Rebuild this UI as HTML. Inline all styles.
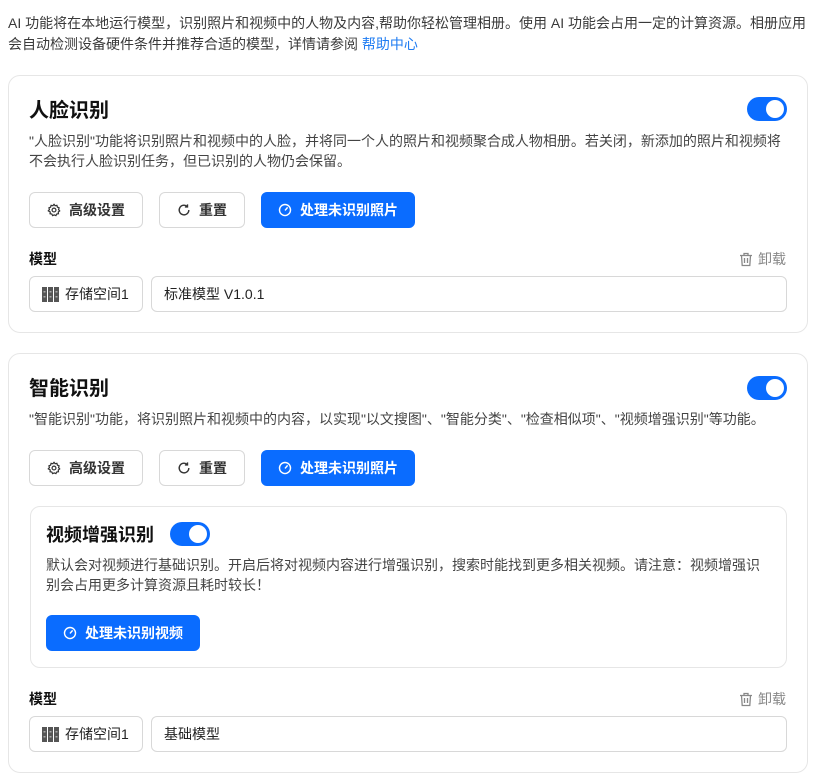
<!DOCTYPE html>
<html><head><meta charset="utf-8"><style>
*{box-sizing:border-box;margin:0;padding:0}
body{width:838px;height:775px;background:#fff;font-family:"Liberation Sans","Noto Sans CJK SC",sans-serif;color:#333;overflow:hidden;position:relative}
.abs{position:absolute}
.intro{left:8px;top:13px;font-size:14px;line-height:21px;color:#3a3a3a;white-space:nowrap}
.intro a{color:#1f7cf2;text-decoration:none}
.card{position:absolute;left:8px;width:800px;border:1px solid #e6e6e6;border-radius:12px;background:#fff}
.title{font-size:20px;font-weight:bold;color:#111}
.toggle{position:absolute;width:40px;height:24px;border-radius:12px;background:#0a6cff}
.toggle:after{content:"";position:absolute;right:3px;top:3px;width:18px;height:18px;border-radius:50%;background:#fff}
.desc{font-size:14px;line-height:20px;color:#444;white-space:nowrap}
.btn{position:absolute;height:36px;border:1px solid #d8d8d8;border-radius:6px;font-size:14px;font-weight:bold;color:#333;display:flex;align-items:center;justify-content:center;gap:8px;background:#fff;line-height:1}
.btn.p{background:#0a6cff;border-color:#0a6cff;color:#fff}
.lbl{font-size:14px;font-weight:bold;color:#111}
.un{font-size:14px;color:#888;display:flex;align-items:center;gap:5px}
.inp{position:absolute;height:36px;border:1px solid #d8d8d8;border-radius:6px;font-size:14px;color:#222;display:flex;align-items:center;padding-left:12px}
svg{display:block}
</style></head><body>
<div class="abs intro">AI 功能将在本地运行模型，识别照片和视频中的人物及内容,帮助你轻松管理相册。使用 AI 功能会占用一定的计算资源。相册应用<br>会自动检测设备硬件条件并推荐合适的模型，详情请参阅 <a>帮助中心</a></div>

<div class="card" style="top:75px;height:258px"></div>
<div class="abs title" style="left:29px;top:94px">人脸识别</div>
<div class="toggle" style="left:747px;top:97px"></div>
<div class="abs desc" style="left:29px;top:131px">"人脸识别"功能将识别照片和视频中的人脸，并将同一个人的照片和视频聚合成人物相册。若关闭，新添加的照片和视频将<br>不会执行人脸识别任务，但已识别的人物仍会保留。</div>

<div class="btn" style="left:29px;top:192px;width:114px"><svg width="14" height="14" viewBox="0 0 16 16" fill="none" stroke="#333" stroke-width="1.4"><circle cx="8" cy="8" r="2.2"/><path d="M8 1.5l1.3 1.6 2-.4.6 2 1.9.8-.6 2 1.3 1.5-1.6 1.3.2 2-2 .3-.9 1.8-1.9-.8-1.9.8-.9-1.8-2-.3.2-2L1.5 9l1.3-1.5-.6-2 1.9-.8.6-2 2 .4z"/></svg>高级设置</div>
<div class="btn" style="left:159px;top:192px;width:86px"><svg width="14" height="14" viewBox="0 0 16 16" fill="none" stroke="#333" stroke-width="1.6"><path d="M13.5 8A5.5 5.5 0 1 1 11.5 3.8"/><path d="M12 1.5v3h-3"/></svg>重置</div>
<div class="btn p" style="left:261px;top:192px;width:154px"><svg width="14" height="14" viewBox="0 0 16 16" fill="none" stroke="#fff" stroke-width="1.6"><circle cx="8" cy="8" r="6.3"/><path d="M8 8.5l3-3.5"/></svg>处理未识别照片</div>

<div class="abs lbl" style="left:29px;top:249px">模型</div>
<div class="abs un" style="left:739px;top:249px"><svg width="14" height="15" viewBox="0 0 14 15" fill="none" stroke="#888" stroke-width="1.3"><path d="M1 3.5h12M5 3.5V1.5h4v2M2.5 3.5l.7 10h7.6l.7-10M5.5 6v5M8.5 6v5"/></svg>卸载</div>
<div class="inp" style="left:29px;top:276px;width:114px"><svg width="17" height="15" viewBox="0 0 17 15" style="margin-right:6px"><rect x="0" y="0" width="5" height="15" fill="#555"/><rect x="6" y="0" width="5" height="15" fill="#555"/><rect x="12" y="0" width="5" height="15" fill="#555"/><g fill="#aaa"><rect x="1.5" y="4" width="2" height="1.5"/><rect x="7.5" y="4" width="2" height="1.5"/><rect x="13.5" y="4" width="2" height="1.5"/><rect x="1.5" y="9" width="2" height="1.5"/><rect x="7.5" y="9" width="2" height="1.5"/><rect x="13.5" y="9" width="2" height="1.5"/></g></svg>存储空间1</div>
<div class="inp" style="left:151px;top:276px;width:636px">标准模型 V1.0.1</div>

<div class="card" style="top:353px;height:420px"></div>
<div class="abs title" style="left:29px;top:372px">智能识别</div>
<div class="toggle" style="left:747px;top:376px"></div>
<div class="abs desc" style="left:29px;top:409px">"智能识别"功能，将识别照片和视频中的内容，以实现"以文搜图"、"智能分类"、"检查相似项"、"视频增强识别"等功能。</div>

<div class="btn" style="left:29px;top:450px;width:114px"><svg width="14" height="14" viewBox="0 0 16 16" fill="none" stroke="#333" stroke-width="1.4"><circle cx="8" cy="8" r="2.2"/><path d="M8 1.5l1.3 1.6 2-.4.6 2 1.9.8-.6 2 1.3 1.5-1.6 1.3.2 2-2 .3-.9 1.8-1.9-.8-1.9.8-.9-1.8-2-.3.2-2L1.5 9l1.3-1.5-.6-2 1.9-.8.6-2 2 .4z"/></svg>高级设置</div>
<div class="btn" style="left:159px;top:450px;width:86px"><svg width="14" height="14" viewBox="0 0 16 16" fill="none" stroke="#333" stroke-width="1.6"><path d="M13.5 8A5.5 5.5 0 1 1 11.5 3.8"/><path d="M12 1.5v3h-3"/></svg>重置</div>
<div class="btn p" style="left:261px;top:450px;width:154px"><svg width="14" height="14" viewBox="0 0 16 16" fill="none" stroke="#fff" stroke-width="1.6"><circle cx="8" cy="8" r="6.3"/><path d="M8 8.5l3-3.5"/></svg>处理未识别照片</div>

<div class="abs" style="left:30px;top:506px;width:757px;height:162px;border:1px solid #e6e6e6;border-radius:10px"></div>
<div class="abs" style="left:46px;top:521px;font-size:18px;font-weight:bold;color:#111">视频增强识别</div>
<div class="toggle" style="left:170px;top:522px"></div>
<div class="abs desc" style="left:46px;top:555px">默认会对视频进行基础识别。开启后将对视频内容进行增强识别，搜索时能找到更多相关视频。请注意：视频增强识<br>别会占用更多计算资源且耗时较长！</div>
<div class="btn p" style="left:46px;top:615px;width:154px"><svg width="14" height="14" viewBox="0 0 16 16" fill="none" stroke="#fff" stroke-width="1.6"><circle cx="8" cy="8" r="6.3"/><path d="M8 8.5l3-3.5"/></svg>处理未识别视频</div>

<div class="abs lbl" style="left:29px;top:689px">模型</div>
<div class="abs un" style="left:739px;top:689px"><svg width="14" height="15" viewBox="0 0 14 15" fill="none" stroke="#888" stroke-width="1.3"><path d="M1 3.5h12M5 3.5V1.5h4v2M2.5 3.5l.7 10h7.6l.7-10M5.5 6v5M8.5 6v5"/></svg>卸载</div>
<div class="inp" style="left:29px;top:716px;width:114px"><svg width="17" height="15" viewBox="0 0 17 15" style="margin-right:6px"><rect x="0" y="0" width="5" height="15" fill="#555"/><rect x="6" y="0" width="5" height="15" fill="#555"/><rect x="12" y="0" width="5" height="15" fill="#555"/><g fill="#aaa"><rect x="1.5" y="4" width="2" height="1.5"/><rect x="7.5" y="4" width="2" height="1.5"/><rect x="13.5" y="4" width="2" height="1.5"/><rect x="1.5" y="9" width="2" height="1.5"/><rect x="7.5" y="9" width="2" height="1.5"/><rect x="13.5" y="9" width="2" height="1.5"/></g></svg>存储空间1</div>
<div class="inp" style="left:151px;top:716px;width:636px">基础模型</div>
</body></html>
